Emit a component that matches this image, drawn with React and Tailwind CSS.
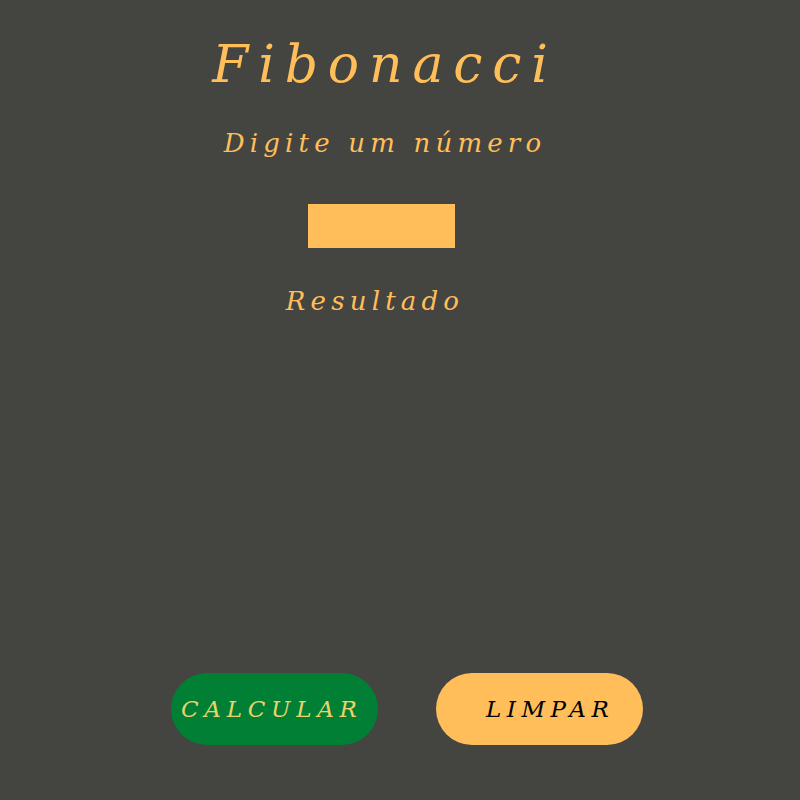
import React from "react";

const font = { fontFamily: '"DejaVu Serif", serif' };

export default function App() {
  return (
    <div className="w-[800px] h-[800px] bg-[#444441] flex flex-col" style={font}>
      <div className="w-[762px] flex flex-col items-center">
        <h1 className="mt-[32px] text-[52px] leading-[64px] italic tracking-[0.19em] text-[#ffbe5a] ml-[8px]">
          Fibonacci
        </h1>
        <p className="mt-[30px] text-[26px] leading-[34px] italic tracking-[0.2em] text-[#ffbe5a] ml-[8px]">
          Digite um número
        </p>
        <input className="mt-[44px] w-[147px] h-[44px] bg-[#ffbe5a] outline-none" />
        <p className="mt-[36px] text-[26px] leading-[34px] italic tracking-[0.2em] text-[#ffbe5a] -ml-[12px]">
          Resultado
        </p>
      </div>
      <div className="mt-auto mb-[55px] flex justify-center gap-[58px] pl-[14px]">
        <button className="w-[207px] h-[72px] rounded-full bg-[#007f35] text-[#e9d36a] text-[23px] italic tracking-[0.25em] pl-[10px] text-left">
          CALCULAR
        </button>
        <button className="w-[207px] h-[72px] rounded-full bg-[#ffbe5a] text-black text-[23px] italic tracking-[0.24em] pl-[50px] text-left">
          LIMPAR
        </button>
      </div>
    </div>
  );
}
